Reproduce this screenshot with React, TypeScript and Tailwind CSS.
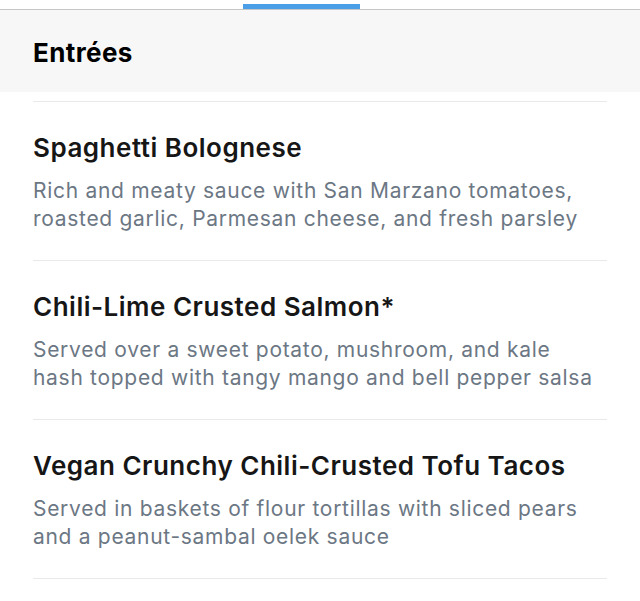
import React from 'react';

const items = [
  {
    name: 'Spaghetti Bolognese',
    lines: ['Rich and meaty sauce with San Marzano tomatoes,', 'roasted garlic, Parmesan cheese, and fresh parsley'],
  },
  {
    name: 'Chili-Lime Crusted Salmon*',
    lines: ['Served over a sweet potato, mushroom, and kale', 'hash topped with tangy mango and bell pepper salsa'],
  },
  {
    name: 'Vegan Crunchy Chili-Crusted Tofu Tacos',
    lines: ['Served in baskets of flour tortillas with sliced pears', 'and a peanut-sambal oelek sauce'],
  },
];

export default function App() {
  return (
    <div className="w-[640px] h-[601px] bg-white overflow-hidden font-['Inter','Liberation_Sans',sans-serif]">
      {/* Tab indicator */}
      <div className="pt-[4px]">
        <div className="ml-[243px] w-[117px] h-[5px] bg-[#4a9fe6]" />
      </div>
      <div className="h-px bg-[#c6c6c6]" />

      {/* Section header */}
      <div className="h-[82px] bg-[#f7f7f7] flex items-center px-[33px] pt-[2px]">
        <h2 className="text-[26px] font-bold text-black tracking-[0.4px]">Entrées</h2>
      </div>

      {/* Items */}
      <div className="px-[33px] pt-[9px]">
        {items.map((item) => (
          <div key={item.name} className="border-t border-[#e9e9e9] pt-[31px] pb-[27px]">
            <p className="text-[26px] leading-[30px] font-semibold text-[#161616] tracking-[0.5px]">{item.name}</p>
            <p className="mt-[14px] text-[21px] leading-[28px] text-[#6c7784] tracking-[0.7px]">
              {item.lines.map((l) => (
                <span key={l} className="block whitespace-nowrap">{l}</span>
              ))}
            </p>
          </div>
        ))}
        <div className="border-t border-[#e9e9e9]" />
      </div>
    </div>
  );
}
